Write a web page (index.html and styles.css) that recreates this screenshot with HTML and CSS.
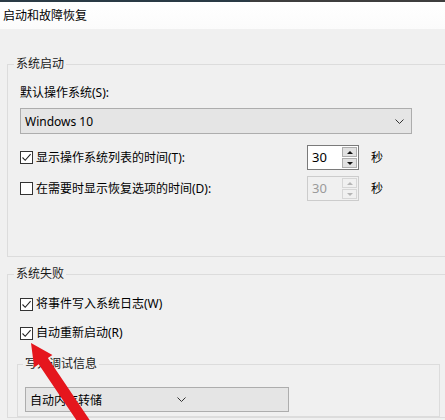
FILE: index.html
```html
<!DOCTYPE html>
<html lang="zh-CN">
<head>
<meta charset="utf-8">
<title>启动和故障恢复</title>
<link rel="stylesheet" href="styles.css">
</head>
<body>
<div class="topbar"><span class="topbar-accent"></span></div>
<div class="title">启动和故障恢复</div>
<div class="content">
  <fieldset class="group">
    <legend class="legend">系统启动</legend>
    <div class="group-body">
      <div class="label">默认操作系统(S):</div>
      <div class="select select-os"><span>Windows 10</span><svg class="chev" width="9" height="5" viewBox="0 0 9 5"><path d="M0.5 0.5 L4.5 4.5 L8.5 0.5" fill="none" stroke="#333" stroke-width="1"/></svg></div>
      <div class="row row-first">
        <label class="check"><span class="box checked"><svg width="11" height="11" viewBox="0 0 11 11"><path d="M1.5 5.5 L4.2 8.3 L9.6 2.2" fill="none" stroke="#222" stroke-width="1.1"/></svg></span><span>显示操作系统列表的时间(T):</span></label>
        <div class="spin"><span class="spin-text">30</span><span class="spin-btns"><span class="sb"><i class="up"></i></span><span class="sb"><i class="down"></i></span></span></div>
        <span class="unit">秒</span>
      </div>
      <div class="row row-second">
        <label class="check"><span class="box"></span><span>在需要时显示恢复选项的时间(D):</span></label>
        <div class="spin disabled"><span class="spin-text">30</span><span class="spin-btns"><span class="sb"><i class="up"></i></span><span class="sb"><i class="down"></i></span></span></div>
        <span class="unit">秒</span>
      </div>
    </div>
  </fieldset>
  <fieldset class="group group-fail">
    <legend class="legend">系统失败</legend>
    <div class="group-body group-body-fail">
      <label class="check line line-first"><span class="box checked"><svg width="11" height="11" viewBox="0 0 11 11"><path d="M1.5 5.5 L4.2 8.3 L9.6 2.2" fill="none" stroke="#222" stroke-width="1.1"/></svg></span><span>将事件写入系统日志(W)</span></label>
      <label class="check line line-second"><span class="box checked"><svg width="11" height="11" viewBox="0 0 11 11"><path d="M1.5 5.5 L4.2 8.3 L9.6 2.2" fill="none" stroke="#222" stroke-width="1.1"/></svg></span><span>自动重新启动(R)</span></label>
      <fieldset class="subgroup">
        <legend class="legend sublegend">写入调试信息</legend>
        <div class="select select-dump"><span>自动内存转储</span><svg class="chev" width="9" height="5" viewBox="0 0 9 5"><path d="M0.5 0.5 L4.5 4.5 L8.5 0.5" fill="none" stroke="#333" stroke-width="1"/></svg></div>
      </fieldset>
    </div>
  </fieldset>
</div>
<svg class="arrow" width="445" height="420" viewBox="0 0 445 420">
  <polygon points="31,343 52.4,355 47.9,358.1 92.7,424.5 83.5,430.7 38.7,364.3 34.2,367.4" fill="#e5161d"/>
</svg>
</body>
</html>
```
FILE: styles.css
```css
html, body {
  margin: 0;
  padding: 0;
}
body {
  width: 445px;
  height: 420px;
  overflow: hidden;
  position: relative;
  background: #f0f0f0;
  font-family: "Noto Sans", "Noto Sans CJK SC", sans-serif;
  font-size: 12px;
  color: #000;
}
.topbar {
  height: 2px;
  background: #3e3e3e;
  display: flex;
}
.topbar-accent {
  width: 250px;
  background: #2a3a45;
}
.title {
  height: 27px;
  line-height: 27px;
  padding-left: 3px;
  background: linear-gradient(#ffffff, #fbfbfb);
}
.content {
  overflow: hidden;
  height: 391px;
}
.group {
  margin: 27px -30px 0 7px;
  border: 1px solid #dcdcdc;
  padding: 0;
  min-width: 0;
}
.legend {
  margin-left: 6px;
  padding: 0 2px;
  line-height: 16px;
  color: #1a1a1a;
}
.group-body {
  padding: 0 0 55px 12px;
}
.group-body-fail {
  padding-bottom: 0;
}
.label {
  margin-top: 13px;
  line-height: 16px;
}
.select {
  box-sizing: border-box;
  display: flex;
  align-items: center;
  justify-content: space-between;
  background: #e5e5e5;
  border: 1px solid #adadad;
}
.select-os {
  margin-top: 7px;
  width: 392px;
  height: 26px;
  padding: 0 7px 0 4px;
}
.chev {
  display: block;
}
.row {
  display: grid;
  grid-template-columns: 275px 52px auto;
  column-gap: 12px;
  align-items: center;
  height: 25px;
}
.row-first { margin-top: 11px; }
.row-second { margin-top: 6px; }
.check {
  display: flex;
  align-items: center;
  gap: 3px;
  line-height: 16px;
}
.box {
  box-sizing: border-box;
  width: 13px;
  height: 13px;
  border: 1px solid #333;
  background: #fff;
  display: flex;
  align-items: center;
  justify-content: center;
}
.spin {
  box-sizing: border-box;
  width: 52px;
  height: 25px;
  border: 1px solid #7a7a7a;
  background: #fff;
  display: flex;
}
.spin-text {
  flex: 1;
  line-height: 23px;
  padding-left: 4px;
  font-size: 13px;
}
.spin-btns {
  width: 15px;
  display: flex;
  flex-direction: column;
  padding: 1px 1px 1px 0;
  gap: 1px;
}
.sb {
  flex: 1;
  box-sizing: border-box;
  border: 1px solid #adadad;
  background: #e1e1e1;
  display: flex;
  align-items: center;
  justify-content: center;
}
.up, .down {
  width: 0;
  height: 0;
  border-left: 3px solid transparent;
  border-right: 3px solid transparent;
}
.up { border-bottom: 3px solid #111; }
.down { border-top: 3px solid #111; }
.spin.disabled {
  border-color: #cccccc;
  background: #f0f0f0;
}
.spin.disabled .spin-text { color: #9a9a9a; }
.spin.disabled .sb {
  border-color: #d6d6d6;
  background: #f0f0f0;
}
.spin.disabled .up { border-bottom-color: #b5b5b5; }
.spin.disabled .down { border-top-color: #b5b5b5; }
.unit {
  line-height: 16px;
}
.group-fail {
  margin-top: 9px;
}
.line-first { margin-top: 14px; }
.line-second { margin-top: 13px; }
.subgroup {
  margin: 15px 0 0 -3px;
  width: 423px;
  box-sizing: border-box;
  border: 1px solid #dcdcdc;
  padding: 0 0 4px 7px;
  min-width: 0;
}
.sublegend {
  margin-left: -2px;
}
.select-dump {
  margin-top: 15px;
  width: 264px;
  height: 25px;
  padding: 0 102px 0 4px;
}
.arrow {
  position: absolute;
  left: 0;
  top: 0;
  pointer-events: none;
}
```
